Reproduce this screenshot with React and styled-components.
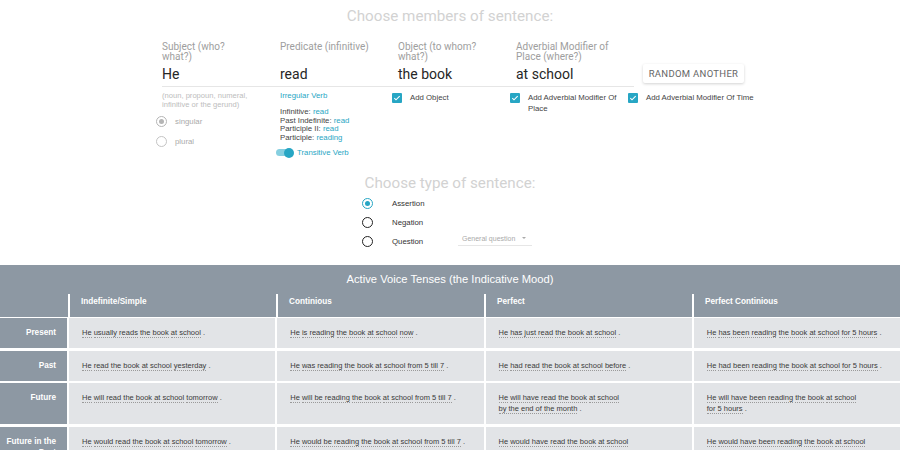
import styled, { createGlobalStyle } from "styled-components";

const TEAL = "#27a6c4";

const GlobalStyle = createGlobalStyle`
  body {
    margin: 0;
    background: #fff;
    font-family: Roboto, "Liberation Sans", sans-serif;
  }
`;

const Page = styled.div`
  width: 900px;
  height: 450px;
  overflow: hidden;
`;

const Title = styled.h2`
  margin: 0;
  padding-top: ${(p) => p.$top || 0}px;
  text-align: center;
  font-size: 15.2px;
  line-height: 20px;
  font-weight: 400;
  color: #d2d2d2;
`;

const Members = styled.div`
  margin: 16px 0 0 162px;
  display: grid;
  grid-template-columns: repeat(4, 118px) auto;
  align-items: end;
`;

const Field = styled.div`
  display: flex;
  flex-direction: column;
  padding-right: 10px;
  border-bottom: 1px solid #e6e6e6;
  margin-right: ${(p) => (p.$last ? 0 : -10)}px;
`;

const FieldLabel = styled.label`
  font-size: 10px;
  line-height: 10px;
  color: #9e9e9e;
  height: 20px;
  width: 93px;
`;

const FieldValue = styled.div`
  font-size: 14px;
  line-height: 22px;
  height: 23px;
  color: #262626;
  padding-top: 1px;
`;

const RandomButton = styled.button`
  justify-self: start;
  align-self: start;
  margin: 22px 0 0 9px;
  width: 101px;
  height: 19px;
  padding: 0;
  border: none;
  background: #fff;
  box-shadow: 0 1px 3px rgba(0, 0, 0, 0.18);
  border-radius: 2px;
  font-family: Roboto, sans-serif;
  font-weight: 400;
  font-size: 9.5px;
  letter-spacing: 0.3px;
  color: #666;
`;

const Options = styled.div`
  margin: 4px 0 0 162px;
  display: grid;
  grid-template-columns: repeat(4, 118px) auto;
  align-items: start;
  font-family: "Liberation Sans", Arial, sans-serif;
  font-weight: 400;
`;

const Hint = styled.div`
  font-size: 7.6px;
  line-height: 9px;
  color: #bdbdbd;
  width: 100px;
`;

const RadioStack = styled.div`
  display: flex;
  flex-direction: column;
  gap: 9px;
  margin: 7px 0 0 -6px;
`;

const RadioRow = styled.div`
  display: flex;
  align-items: center;
  gap: ${(p) => p.$gap || 8}px;
  height: ${(p) => p.$h || 11}px;
  font-size: 7.8px;
  color: ${(p) => p.$color || "#aaa"};
`;

const RadioCircle = styled.span`
  box-sizing: border-box;
  width: 11px;
  height: 11px;
  border-radius: 50%;
  border: 1.3px solid ${(p) => p.$color};
  display: flex;
  align-items: center;
  justify-content: center;
  flex: none;

  &::after {
    content: "";
    display: ${(p) => (p.$on ? "block" : "none")};
    width: 5px;
    height: 5px;
    border-radius: 50%;
    background: ${(p) => p.$color};
  }
`;

const TealText = styled.span`
  color: ${TEAL};
`;

const Irregular = styled.div`
  font-size: 7.8px;
  line-height: 9px;
  color: ${TEAL};
`;

const FormsList = styled.div`
  margin-top: 8px;
  font-size: 7.8px;
  line-height: 8.6px;
  color: #444;
`;

const Toggle = styled.div`
  display: flex;
  align-items: center;
  gap: 4px;
  margin: 6px 0 0 -4px;
  font-size: 7.8px;
  color: ${TEAL};
`;

const Track = styled.span`
  position: relative;
  width: 17px;
  height: 7px;
  border-radius: 4px;
  background: #86cfe0;

  &::after {
    content: "";
    position: absolute;
    right: -1px;
    top: -1.5px;
    width: 10px;
    height: 10px;
    border-radius: 50%;
    background: ${TEAL};
  }
`;

const Check = styled.label`
  display: flex;
  align-items: flex-start;
  gap: 8px;
  margin: 1px 0 0 -6px;
  font-size: 7.8px;
  line-height: 11px;
  color: #444;
  padding-right: 10px;
`;

const Box = styled.span`
  flex: none;
  width: 10px;
  height: 10px;
  margin-top: 1px;
  border-radius: 1px;
  background: ${TEAL};
  display: flex;
  align-items: center;
  justify-content: center;
`;

const TypeSection = styled.div`
  display: flex;
  align-items: flex-end;
  margin: 5px 0 0 362px;
  font-family: "Liberation Sans", Arial, sans-serif;
`;

const TypeList = styled.div`
  width: 96px;
  display: flex;
  flex-direction: column;
  gap: 8px;
`;

const Select = styled.div`
  display: flex;
  align-items: center;
  justify-content: space-between;
  width: 74px;
  height: 15px;
  padding: 0 6px 0 4px;
  box-sizing: border-box;
  margin-bottom: 1px;
  border-bottom: 1px solid #e6e6e6;
  font-size: 7px;
  color: #aaa;
`;

const Caret = styled.span`
  width: 0;
  height: 0;
  border-left: 2.5px solid transparent;
  border-right: 2.5px solid transparent;
  border-top: 2.5px solid #aaa;
`;

const TableWrap = styled.div`
  margin-top: 18px;
  font-family: "Liberation Sans", Arial, sans-serif;
`;

const TableHead = styled.div`
  background: #8d98a3;
  color: #fff;
`;

const TableTitle = styled.div`
  text-align: center;
  font-size: 11.2px;
  line-height: 14px;
  padding-top: 7px;
  height: 15px;
`;

const HeadRow = styled.div`
  display: grid;
  grid-template-columns: 68px repeat(4, 1fr);
  margin-top: 7px;
  height: 23px;
`;

const HeadCell = styled.div`
  border-left: ${(p) => (p.$first ? "none" : "2px solid #fff")};
  padding: 2px 0 0 11px;
  font-size: 8.2px;
  font-weight: 700;
  line-height: 11px;
`;

const Body = styled.div`
  display: grid;
  grid-template-columns: 67px repeat(4, 1fr);
  column-gap: 2px;
  row-gap: 2.5px;
  border-top: 1px solid #fff;
`;

const RowLabel = styled.div`
  background: #8d98a3;
  color: #fff;
  text-align: right;
  font-size: 8.2px;
  font-weight: 700;
  line-height: 11px;
  padding: 9px 11px 10px 6px;
`;

const Cell = styled.div`
  background: #e2e4e7;
  color: #3a3a3a;
  font-size: 7.5px;
  line-height: 11px;
  padding: 9px 13px 10px;
`;

const Phrase = styled.span`
  border-bottom: 1px dotted #9a9a9a;
`;

function CheckIcon() {
  return (
    <svg width="8" height="8" viewBox="0 0 24 24">
      <path d="M4 12.5l5 5L20 6.5" fill="none" stroke="#fff" strokeWidth="3.2" />
    </svg>
  );
}

const rows = [
  {
    label: "Present",
    cells: [
      [["He", "usually reads", "the book", "at school"]],
      [["He", "is reading", "the book", "at school", "now"]],
      [["He", "has just read", "the book", "at school"]],
      [["He", "has been reading", "the book", "at school", "for 5 hours"]],
    ],
  },
  {
    label: "Past",
    cells: [
      [["He", "read", "the book", "at school", "yesterday"]],
      [["He", "was reading", "the book", "at school", "from 5 till 7"]],
      [["He", "had read", "the book", "at school", "before"]],
      [["He", "had been reading", "the book", "at school", "for 5 hours"]],
    ],
  },
  {
    label: "Future",
    cells: [
      [["He", "will read", "the book", "at school", "tomorrow"]],
      [["He", "will be reading", "the book", "at school", "from 5 till 7"]],
      [["He", "will have read", "the book", "at school"], ["by the end of the month"]],
      [["He", "will have been reading", "the book", "at school"], ["for 5 hours"]],
    ],
  },
  {
    label: "Future in the Past",
    cells: [
      [["He", "would read", "the book", "at school", "tomorrow"]],
      [["He", "would be reading", "the book", "at school", "from 5 till 7"]],
      [["He", "would have read", "the book", "at school"], ["by the end of the month"]],
      [["He", "would have been reading", "the book", "at school"], ["for 5 hours"]],
    ],
  },
];

function Sentence({ lines }) {
  return lines.map((line, li) => (
    <div key={li}>
      {line.map((p, i) => (
        <span key={i}>
          {i > 0 && " "}
          <Phrase>{p}</Phrase>
        </span>
      ))}
      {li === lines.length - 1 && " ."}
    </div>
  ));
}

export default function App() {
  return (
    <Page>
      <GlobalStyle />
      <Title $top={6}>Choose members of sentence:</Title>

      <Members>
        <Field>
          <FieldLabel>Subject (who? what?)</FieldLabel>
          <FieldValue>He</FieldValue>
        </Field>
        <Field>
          <FieldLabel>Predicate (infinitive)</FieldLabel>
          <FieldValue>read</FieldValue>
        </Field>
        <Field>
          <FieldLabel>Object (to whom? what?)</FieldLabel>
          <FieldValue>the book</FieldValue>
        </Field>
        <Field $last>
          <FieldLabel>Adverbial Modifier of Place (where?)</FieldLabel>
          <FieldValue>at school</FieldValue>
        </Field>
        <RandomButton>RANDOM ANOTHER</RandomButton>
      </Members>

      <Options>
        <div>
          <Hint>(noun, propoun, numeral, infinitive or the gerund)</Hint>
          <RadioStack>
            <RadioRow>
              <RadioCircle $on $color="#b5b5b5" />
              singular
            </RadioRow>
            <RadioRow>
              <RadioCircle $color="#c4c4c4" />
              plural
            </RadioRow>
          </RadioStack>
        </div>
        <div>
          <Irregular>Irregular Verb</Irregular>
          <FormsList>
            <div>
              Infinitive: <TealText>read</TealText>
            </div>
            <div>
              Past Indefinite: <TealText>read</TealText>
            </div>
            <div>
              Participle II: <TealText>read</TealText>
            </div>
            <div>
              Participle: <TealText>reading</TealText>
            </div>
          </FormsList>
          <Toggle>
            <Track />
            Transitive Verb
          </Toggle>
        </div>
        <Check>
          <Box>
            <CheckIcon />
          </Box>
          Add Object
        </Check>
        <Check>
          <Box>
            <CheckIcon />
          </Box>
          Add Adverbial Modifier Of Place
        </Check>
        <Check>
          <Box>
            <CheckIcon />
          </Box>
          Add Adverbial Modifier Of Time
        </Check>
      </Options>

      <Title $top={16}>Choose type of sentence:</Title>

      <TypeSection>
        <TypeList>
          <RadioRow $gap={19} $color="#333">
            <RadioCircle $on $color={TEAL} />
            Assertion
          </RadioRow>
          <RadioRow $gap={19} $color="#333">
            <RadioCircle $color="#222" />
            Negation
          </RadioRow>
          <RadioRow $gap={19} $color="#333">
            <RadioCircle $color="#222" />
            Question
          </RadioRow>
        </TypeList>
        <Select>
          General question
          <Caret />
        </Select>
      </TypeSection>

      <TableWrap>
        <TableHead>
          <TableTitle>Active Voice Tenses (the Indicative Mood)</TableTitle>
          <HeadRow>
            <HeadCell $first />
            <HeadCell>Indefinite/Simple</HeadCell>
            <HeadCell>Continious</HeadCell>
            <HeadCell>Perfect</HeadCell>
            <HeadCell>Perfect Continious</HeadCell>
          </HeadRow>
        </TableHead>
        <Body>
          {rows.map((r) => (
            <>
              <RowLabel key={r.label}>{r.label}</RowLabel>
              {r.cells.map((c, i) => (
                <Cell key={r.label + i}>
                  <Sentence lines={c} />
                </Cell>
              ))}
            </>
          ))}
        </Body>
      </TableWrap>
    </Page>
  );
}
